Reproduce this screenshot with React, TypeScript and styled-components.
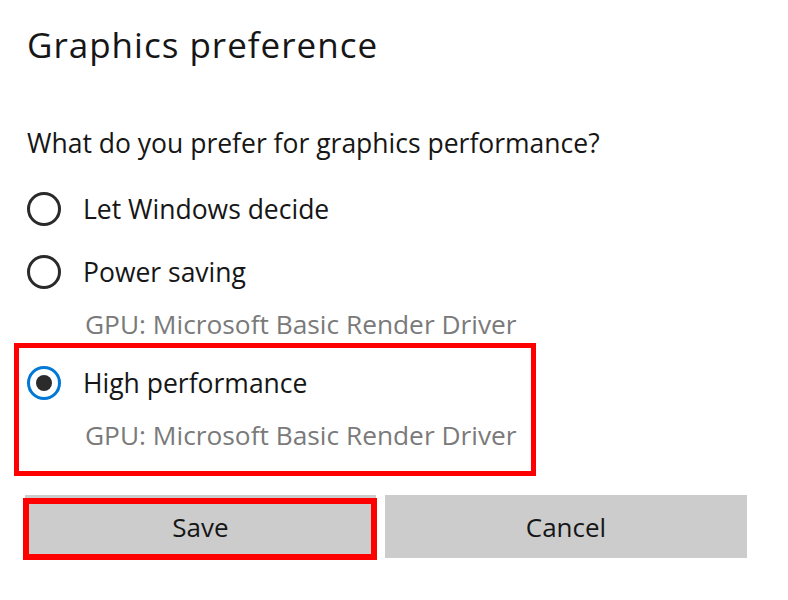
import React from "react";
import styled, { createGlobalStyle } from "styled-components";

const Global = createGlobalStyle`
  html, body { margin: 0; padding: 0; background: #ffffff; }
  body { font-family: "Open Sans", "Noto Sans", sans-serif; color: #161616; }
`;

const Page = styled.div`
  width: 788px;
  height: 600px;
  box-sizing: border-box;
  padding: 0 0 0 27px;
  display: flex;
  flex-direction: column;
`;

const Title = styled.h1`
  margin: 24px 0 0 0;
  font-weight: 400;
  font-size: 35px;
  line-height: 42px;
  letter-spacing: 1px;
`;

const Question = styled.p`
  margin: 61px 0 0 0;
  font-size: 26.5px;
  line-height: 32px;
`;

const OptionList = styled.div`
  display: flex;
  flex-direction: column;
  margin-top: 33px;
`;

const Option = styled.div<{ $gap: number }>`
  display: flex;
  flex-direction: column;
  margin-bottom: ${(p) => p.$gap}px;
`;

const OptionRow = styled.label`
  display: flex;
  align-items: center;
  gap: 22px;
  height: 34px;
  font-size: 26.5px;
`;

const Radio = styled.span<{ $checked?: boolean }>`
  width: 34px;
  height: 34px;
  box-sizing: border-box;
  border-radius: 50%;
  border: 3px solid ${(p) => (p.$checked ? "#0078d7" : "#2a2a2a")};
  display: flex;
  align-items: center;
  justify-content: center;
  flex: none;
  &::after {
    content: "";
    width: 16px;
    height: 16px;
    border-radius: 50%;
    background: #2b2b2b;
    display: ${(p) => (p.$checked ? "block" : "none")};
  }
`;

const SubLabel = styled.div`
  margin: 18px 0 0 58px;
  font-size: 26.3px;
  line-height: 34px;
  color: #7a7a7a;
`;

const Highlight = styled.div`
  margin: 2px 0 0 -13px;
  width: 522px;
  box-sizing: border-box;
  border: 5px solid #ff0000;
  padding: 18px 0 0 8px;
  height: 133px;
`;

const ButtonRow = styled.div`
  display: flex;
  gap: 9px;
  margin: 19px 0 0 -2px;
`;

const Button = styled.button<{ $width: number; $outlined?: boolean }>`
  position: relative;
  width: ${(p) => p.$width}px;
  height: 63px;
  border: none;
  background: #cccccc;
  font-family: "Open Sans", "Noto Sans", sans-serif;
  font-size: 26px;
  color: #161616;
  padding: 0;
  &::after {
    content: "";
    display: ${(p) => (p.$outlined ? "block" : "none")};
    position: absolute;
    left: -2px;
    top: 3px;
    right: -1px;
    bottom: -2px;
    border: 6px solid #ff0000;
  }
`;

export default function App() {
  return (
    <>
      <Global />
      <Page>
        <Title>Graphics preference</Title>
        <Question>What do you prefer for graphics performance?</Question>
        <OptionList>
          <Option $gap={29}>
            <OptionRow>
              <Radio />
              Let Windows decide
            </OptionRow>
          </Option>
          <Option $gap={0}>
            <OptionRow>
              <Radio />
              Power saving
            </OptionRow>
            <SubLabel>GPU: Microsoft Basic Render Driver</SubLabel>
          </Option>
          <Highlight>
            <Option $gap={0}>
              <OptionRow>
                <Radio $checked />
                High performance
              </OptionRow>
              <SubLabel>GPU: Microsoft Basic Render Driver</SubLabel>
            </Option>
          </Highlight>
        </OptionList>
        <ButtonRow>
          <Button $width={351} $outlined>Save</Button>
          <Button $width={362}>Cancel</Button>
        </ButtonRow>
      </Page>
    </>
  );
}
